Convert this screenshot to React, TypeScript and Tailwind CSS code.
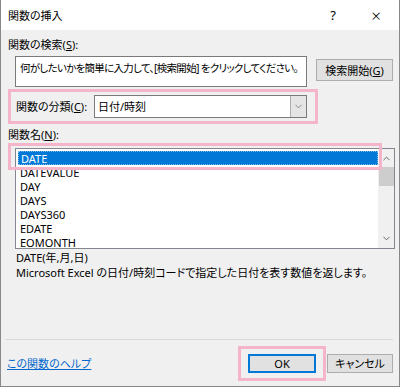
import { ChevronDown, ChevronUp } from "lucide-react";

const FONT =
  "font-['Noto_Sans','Noto_Sans_CJK_JP',sans-serif] [font-feature-settings:'palt']";

const functions = ["DATE", "DATEVALUE", "DAY", "DAYS", "DAYS360", "EDATE", "EOMONTH"];

export default function App() {
  return (
    <div
      className={`${FONT} w-[400px] h-[387px] bg-[#f0f0f0] border-x border-b border-[#888] text-[11px] leading-none text-black flex flex-col`}
    >
      {/* title bar */}
      <div className="h-[30px] bg-white flex items-center pl-[7px] shrink-0">
        <span className="flex-1">関数の挿入</span>
        <span className="w-[40px] text-center text-[13px]">?</span>
        <span className="w-[46px] text-center text-[17px] font-light">×</span>
      </div>

      <div className="flex-1 flex flex-col pl-[7px] pr-[6px]">
        <div className="mt-[9px]">
          関数の検索(<span className="underline">S</span>):
        </div>

        <div className="flex mt-[6px] pl-[7px]">
          <div className="w-[293px] h-[31px] bg-white border border-[#7a7a7a] pl-[4px] pt-[6px] whitespace-nowrap overflow-hidden text-[10.5px] tracking-[-0.7px]">
            何がしたいかを簡単に入力して、[検索開始] をクリックしてください。
          </div>
          <button className="ml-[9px] mt-[3px] w-[77px] h-[22px] bg-[#e1e1e1] border border-[#adadad] flex items-center justify-center">
            検索開始(<span className="underline">G</span>)
          </button>
        </div>

        <div className="mt-[2px] w-[310px] h-[35px] border-[3px] border-[#f4b4c9] flex items-center pl-[5px]">
          <span className="w-[78px]">
            関数の分類(<span className="underline">C</span>):
          </span>
          <div className="w-[213px] h-[23px] bg-white border border-[#7a7a7a] flex items-center">
            <span className="flex-1 pl-[3px]">日付/時刻</span>
            <div className="w-[16px] h-full bg-[#e5e5e5] border-l border-[#adadad] flex items-center justify-center">
              <ChevronDown size={11} strokeWidth={1.5} className="text-[#606060]" />
            </div>
          </div>
        </div>

        <div className="mt-[5px]">
          関数名(<span className="underline">N</span>):
        </div>

        <div className="relative mt-[8px] ml-[7px] w-[380px] h-[101px] bg-white border border-[#828790] flex">
          <div className="flex-1 pt-[2px] pl-[2px]">
            {functions.map((f, i) => (
              <div
                key={f}
                className={`h-[14px] flex items-center pl-[2px] ${
                  i === 0 ? "bg-[#0078d7] text-white border border-dotted border-[#7fb6e8]" : ""
                }`}
              >
                {f}
              </div>
            ))}
          </div>
          <div className="w-[16px] bg-[#f0f0f0] flex flex-col items-center">
            <ChevronUp size={11} strokeWidth={2} className="mt-[4px] text-[#606060]" />
            <div className="mt-[3px] w-[15px] h-[19px] bg-[#cdcdcd]" />
            <div className="flex-1" />
            <ChevronDown size={11} strokeWidth={2} className="mb-[4px] text-[#606060]" />
          </div>
          <div className="absolute left-[-8px] top-[-6px] w-[374px] h-[27px] border-[3px] border-[#f4b4c9]" />
        </div>

        <div className="mt-[3px] pl-[8px] flex flex-col gap-[4px]">
          <div>DATE(年,月,日)</div>
          <div>Microsoft Excel の日付/時刻コードで指定した日付を表す数値を返します。</div>
        </div>

        <div className="flex-1" />
        <div className="h-px bg-[#d9d9d9] ml-[-2px]" />

        <div className="h-[46px] flex items-center">
          <a className="flex-1 text-[#0066cc] underline -ml-px">この関数のヘルプ</a>
          <div className="relative">
            <button className="w-[68px] h-[19px] bg-[#e1e1e1] border-2 border-[#0078d7] flex items-center justify-center">
              OK
            </button>
            <div className="absolute left-[-10px] top-[-8px] w-[88px] h-[35px] border-[3px] border-[#f4b4c9]" />
          </div>
          <button className="ml-[11px] w-[66px] h-[19px] bg-[#e1e1e1] border border-[#adadad] flex items-center justify-center">
            キャンセル
          </button>
        </div>
      </div>
    </div>
  );
}
